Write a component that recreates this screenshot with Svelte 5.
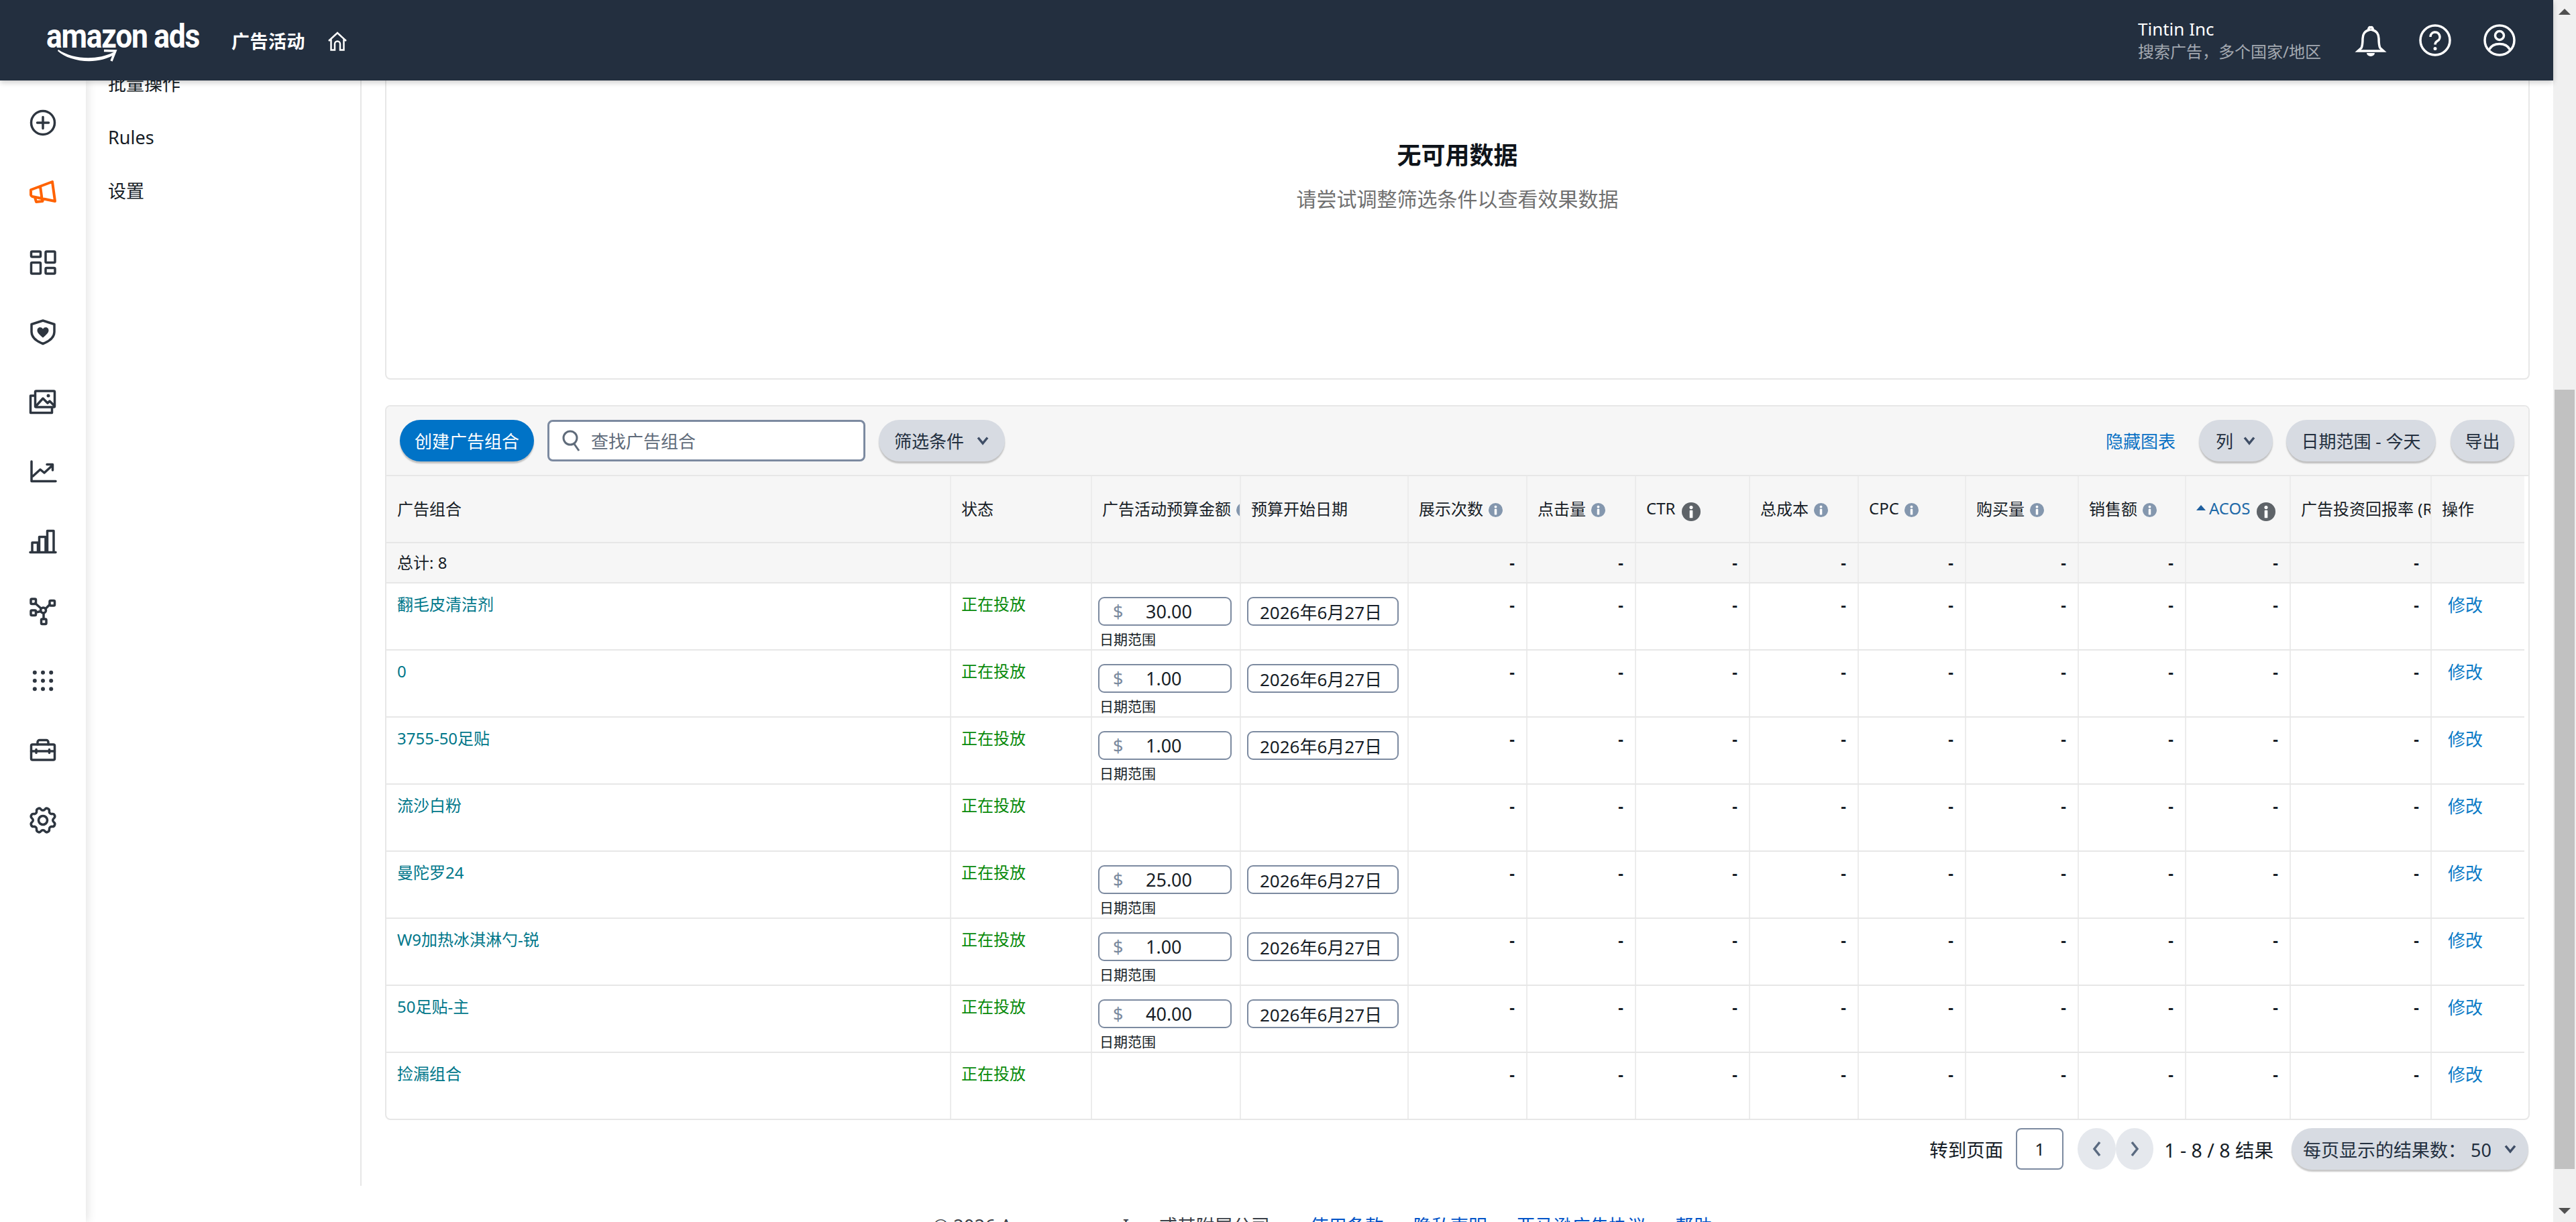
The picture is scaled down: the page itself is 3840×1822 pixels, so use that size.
<script>
  const rows = [
    { name: '翻毛皮清洁剂', budget: '30.00' },
    { name: '0', budget: '1.00' },
    { name: '3755-50足贴', budget: '1.00' },
    { name: '流沙白粉', budget: null },
    { name: '曼陀罗24', budget: '25.00' },
    { name: 'W9加热冰淇淋勺-锐', budget: '1.00' },
    { name: '50足贴-主', budget: '40.00' },
    { name: '捡漏组合', budget: null }
  ];
  const metrics = [
    { label: '展示次数', info: 'light' },
    { label: '点击量', info: 'light' },
    { label: 'CTR', info: 'dark' },
    { label: '总成本', info: 'light' },
    { label: 'CPC', info: 'light' },
    { label: '购买量', info: 'light' },
    { label: '销售额', info: 'light' },
    { label: 'ACOS', info: 'dark', sorted: true },
    { label: '广告投资回报率 (ROAS)', info: null }
  ];
</script>

{#snippet info(kind)}
  <svg class="info {kind}" viewBox="0 0 24 24" aria-hidden="true">
    <circle cx="12" cy="12" r="12" />
    <circle class="glyph" cx="12" cy="6.5" r="2.2" />
    <rect class="glyph" x="10" y="10" width="4" height="10" rx="1" />
  </svg>
{/snippet}

{#snippet chevron()}
  <svg class="chev" viewBox="0 0 20 14" aria-hidden="true"><path d="M3 2.5 10 11l7-8.5" /></svg>
{/snippet}

<div class="app">
  <div class="page">
    <header class="top">
      <div class="logo">
        <span class="logo-text">amazon ads</span>
        <svg class="swoosh" viewBox="0 0 100 30" aria-hidden="true">
          <path class="sw-fill" d="M1 6C18 22 60 28 86 11L84 8C60 20 24 19 2 4Z" />
          <path class="sw-head" d="M70 5.500 87 6 81 21" />
        </svg>
      </div>
      <span class="top-title">广告活动</span>
      <svg class="home" viewBox="0 0 30 30" aria-hidden="true">
        <path d="M2 14 15 2l13 12M5.500 11.500V27.500H11V18.500a4 4 0 0 1 8 0V27.500h5.500V11.500" />
      </svg>
      <div class="account">
        <div class="acct-name">Tintin Inc</div>
        <div class="acct-sub">搜索广告，多个国家/地区</div>
      </div>
      <svg class="top-icon bell" viewBox="0 0 48 48" aria-hidden="true">
        <path d="M24 5a2 2 0 0 1 2 3.500c7 1.500 10 7 10 13 0 7 1 12 2 14l5 4.500H5l5-4.500c1-2 2-7 2-14 0-6 3-11.500 10-13A2 2 0 0 1 24 5Z" />
        <path class="bell-clap" d="M18 43h12a6 5 0 0 1-12 0Z" />
      </svg>
      <svg class="top-icon help" viewBox="0 0 48 48" aria-hidden="true">
        <circle cx="24" cy="24" r="22" />
        <path d="M17 19a7 7 0 1 1 10.500 6c-2.500 1.500-3.500 2.500-3.500 5.500" />
        <circle class="dot" cx="24" cy="36.500" r="2.500" />
      </svg>
      <svg class="top-icon user" viewBox="0 0 48 48" aria-hidden="true">
        <circle cx="24" cy="24" r="22" />
        <circle cx="24" cy="17" r="6.500" />
        <path d="M8.500 38c3-6 9-8.500 15.500-8.500S36.500 32 39.500 38" />
      </svg>
    </header>

    <div class="body">
      <aside class="rail">
        <svg class="ri" viewBox="0 0 48 48"><circle cx="24" cy="24" r="17.500" /><path d="M24 15.500v17M15.500 24h17" /></svg>
        <svg class="ri orange" viewBox="0 0 48 48"><path d="M6 20 38 8l4 29-34-7a3.500 3.500 0 0 1-2-2.500ZM20 15l2.500 18M12 31.500l2 6.500 9.500-1-1-3" /></svg>
        <svg class="ri" viewBox="0 0 48 48"><rect x="6.500" y="8" width="14" height="8" rx="1.500" /><rect x="28" y="8" width="14" height="16.500" rx="1.500" /><rect x="6.500" y="24.500" width="14" height="16.500" rx="1.500" /><rect x="28" y="32.500" width="14" height="8.500" rx="1.500" /></svg>
        <svg class="ri" viewBox="0 0 48 48"><path d="M24 7l17 5.500V24c0 9-8 14-17 17.500C15 38 7 33 7 24V12.500Z" /><path class="solid" d="M24 32.500C19 28 15.500 25.500 15.500 21.500 15.500 16.500 21.500 15.500 24 19.500 26.500 15.500 32.500 16.500 32.500 21.500 32.500 25.500 29 28 24 32.500Z" /></svg>
        <svg class="ri" viewBox="0 0 48 48"><rect x="12.500" y="8" width="29" height="24" rx="1.500" /><path d="M12 15H5.500v25.500h32V34M14 30l10-11 7 7 3-3 6 6" /><circle class="solid" cx="32" cy="15" r="2.500" /></svg>
        <svg class="ri" viewBox="0 0 48 48"><path d="M7 9v29.500h36M9 31l11-10 6 5 12-11M30 13.500h8.500V22" /></svg>
        <svg class="ri" viewBox="0 0 48 48"><path d="M8 39V26h8.500v13M18.500 39V17.500H28V39M30.500 39V8.500H40V39M5 40.500h38" /></svg>
        <svg class="ri" viewBox="0 0 48 48"><rect x="6" y="6" width="7.500" height="7.500" rx="1.500" /><rect x="34" y="8.500" width="7.500" height="7.500" rx="1.500" /><rect x="6" y="23" width="7.500" height="7.500" rx="1.500" /><rect x="21.500" y="36" width="7.500" height="7.500" rx="1.500" /><circle cx="24.500" cy="23" r="4" /><path d="M12.500 12.500 21 20M34 14.500 28 20.500M13.500 26l7.500-1.500M25 27v9" /></svg>
        <svg class="ri" viewBox="0 0 48 48"><g class="solid"><circle cx="11.800" cy="11.800" r="3" /><circle cx="24" cy="11.800" r="3" /><circle cx="36.200" cy="11.800" r="3" /><circle cx="11.800" cy="24" r="3" /><circle cx="24" cy="24" r="3" /><circle cx="36.200" cy="24" r="3" /><circle cx="11.800" cy="36.200" r="3" /><circle cx="24" cy="36.200" r="3" /><circle cx="36.200" cy="36.200" r="3" /></g></svg>
        <svg class="ri" viewBox="0 0 48 48"><rect x="6.500" y="15" width="35" height="23" rx="2" /><path d="M16 15v-3.500a3 3 0 0 1 3-3h10a3 3 0 0 1 3 3V15M6.500 25h35M14 22.500v5M33.500 22.500v5" /></svg>
        <svg class="ri" viewBox="0 0 24 24"><g transform="translate(12 12) rotate(22.500) scale(1.050) translate(-12 -12)"><path class="thin" d="M10.325 4.317c.426-1.756 2.924-1.756 3.350 0a1.724 1.724 0 0 0 2.573 1.066c1.543-.94 3.310.826 2.370 2.370a1.724 1.724 0 0 0 1.065 2.572c1.756.426 1.756 2.924 0 3.350a1.724 1.724 0 0 0-1.066 2.573c.94 1.543-.826 3.310-2.370 2.370a1.724 1.724 0 0 0-2.572 1.065c-.426 1.756-2.924 1.756-3.350 0a1.724 1.724 0 0 0-2.573-1.066c-1.543.94-3.310-.826-2.370-2.370a1.724 1.724 0 0 0-1.065-2.572c-1.756-.426-1.756-2.924 0-3.350a1.724 1.724 0 0 0 1.066-2.573c-.94-1.543.826-3.310 2.370-2.370.996.608 2.296.07 2.572-1.065Z" /><circle class="thin" cx="12" cy="12" r="3.100" /></g></svg>
      </aside>

      <nav class="side">
        <a class="side-item">批量操作</a>
        <a class="side-item">Rules</a>
        <a class="side-item">设置</a>
      </nav>

      <main class="main">
        <section class="empty">
          <div class="empty-title">无可用数据</div>
          <div class="empty-sub">请尝试调整筛选条件以查看效果数据</div>
        </section>

        <section class="card">
          <div class="toolbar">
            <button class="btn primary">创建广告组合</button>
            <div class="search">
              <svg class="search-icon" viewBox="0 0 28 32" aria-hidden="true"><circle cx="12" cy="12" r="10" /><path d="m18 21 7 10" /></svg>
              <span>查找广告组合</span>
            </div>
            <button class="btn filter">筛选条件 {@render chevron()}</button>
            <a class="hide-chart">隐藏图表</a>
            <button class="btn cols">列 {@render chevron()}</button>
            <button class="btn range">日期范围 - 今天</button>
            <button class="btn export">导出</button>
          </div>

          <div class="row head">
            <div class="c">广告组合</div>
            <div class="c">状态</div>
            <div class="c">广告活动预算金额 {@render info('light')}</div>
            <div class="c">预算开始日期</div>
            {#each metrics as m}
              <div class="c">
                {#if m.sorted}<span class="tri"></span>{/if}
                <span class:sorted={m.sorted}>{m.label}</span>
                {#if m.info}{@render info(m.info)}{/if}
              </div>
            {/each}
            <div class="c">操作</div>
          </div>

          <div class="row total">
            <div class="c">总计: 8</div>
            <div class="c"></div>
            <div class="c"></div>
            <div class="c"></div>
            {#each metrics as m}<div class="c num">-</div>{/each}
            <div class="c"></div>
          </div>

          {#each rows as r}
            <div class="row item">
              <div class="c"><a class="name">{r.name}</a></div>
              <div class="c status">正在投放</div>
              <div class="c field">
                {#if r.budget}
                  <div class="input money"><span class="cur">$</span><span>{r.budget}</span></div>
                  <div class="hint">日期范围</div>
                {/if}
              </div>
              <div class="c field">
                {#if r.budget}<div class="input date">2026年6月27日</div>{/if}
              </div>
              {#each metrics as m}<div class="c num">-</div>{/each}
              <div class="c action"><a class="edit">修改</a></div>
            </div>
          {/each}
        </section>

        <div class="pager">
          <span class="goto">转到页面</span>
          <div class="page-input">1</div>
          <div class="arrows">
            <button class="arrow" aria-label="上一页"><svg viewBox="0 0 14 26"><path d="M11 3 3 13l8 10" /></svg></button>
            <button class="arrow" aria-label="下一页"><svg viewBox="0 0 14 26"><path d="m3 3 8 10-8 10" /></svg></button>
          </div>
          <span class="count">1 - 8 / 8 结果</span>
          <button class="btn per">每页显示的结果数： 50 {@render chevron()}</button>
        </div>

        <footer class="foot">
          <span class="copy">© 2026 Amazon.com, Inc. 或其附属公司</span>
          <a>使用条款</a><a>隐私声明</a><a>亚马逊广告协议</a><a>帮助</a>
        </footer>
      </main>
    </div>
  </div>

  <div class="scrollbar">
    <span class="sb-up"></span>
    <div class="sb-thumb"></div>
    <span class="sb-down"></span>
  </div>
</div>

<style>
  :global(body) {
    margin: 0;
    overflow: hidden;
    background: #fff;
  }
  .app {
    width: 3840px;
    height: 1822px;
    display: flex;
    overflow: hidden;
    font-family: "Noto Sans", "Noto Sans CJK SC", sans-serif;
    color: #161d26;
    font-size: 24px;
  }
  .page {
    width: 3806px;
    height: 1822px;
    display: flex;
    flex-direction: column;
  }
  a { cursor: pointer; }
  button { font: inherit; border: 0; padding: 0; }

  .top {
    height: 120px;
    flex: none;
    background: #232f3f;
    display: flex;
    align-items: center;
    padding: 0 56px 0 69px;
    color: #fff;
    position: relative;
    z-index: 3;
    box-shadow: 0 3px 8px rgba(0, 0, 0, 0.2);
  }
  .logo {
    position: relative;
    width: 230px;
    height: 70px;
    flex: none;
    margin-right: 46px;
    margin-top: -8px;
  }
  .logo-text {
    display: block;
    font-family: Roboto, sans-serif;
    font-weight: 700;
    font-size: 50px;
    line-height: 66px;
    letter-spacing: -1.5px;
    white-space: nowrap;
    transform: scaleX(0.89);
    transform-origin: 0 50%;
  }
  .swoosh {
    position: absolute;
    left: 16px;
    top: 49px;
    width: 100px;
    height: 30px;
  }
  .sw-fill { fill: #fff; }
  .sw-head { fill: none; stroke: #fff; stroke-width: 3.5; }
  .top-title {
    font-size: 27px;
    font-weight: 700;
    letter-spacing: 0.5px;
  }
  .home {
    width: 30px;
    height: 30px;
    margin-left: 33px;
    margin-top: 3px;
    fill: none;
    stroke: #fff;
    stroke-width: 2.500;
  }
  .account {
    margin-left: auto;
    margin-right: 49px;
    width: 274px;
    margin-top: -2px;
  }
  .acct-name { font-size: 26px; line-height: 36px; }
  .acct-sub { font-size: 24px; line-height: 32px; color: #a3a9b1; white-space: nowrap; }
  .top-icon {
    width: 48px;
    height: 48px;
    fill: none;
    stroke: #fff;
    stroke-width: 3.500;
    margin-left: 48px;
    flex: none;
  }
  .top-icon.bell { margin-left: 0; }
  .bell-clap, .dot { fill: #fff; stroke: none; }

  .body {
    flex: 1;
    display: flex;
    min-height: 0;
    overflow: hidden;
  }
  .rail {
    width: 128px;
    flex: none;
    display: flex;
    flex-direction: column;
    align-items: center;
    gap: 56px;
    padding-top: 39px;
    background: #fff;
    box-shadow: 2px 0 14px rgba(0, 0, 0, 0.12);
    position: relative;
    z-index: 2;
  }
  .ri {
    width: 48px;
    height: 48px;
    flex: none;
    fill: none;
    stroke: #2e3640;
    stroke-width: 3.500;
    stroke-linejoin: round;
    stroke-linecap: round;
  }
  .ri .thin { stroke-width: 1.700; }
  .ri .solid { fill: #2e3640; stroke: none; }
  .ri.orange { stroke: #ff6200; stroke-width: 4; }

  .side {
    width: 411px;
    height: 1683px;
    flex: none;
    box-sizing: border-box;
    border-right: 2px solid #e6e6e6;
    padding-left: 33px;
    margin-top: -35px;
    display: flex;
    flex-direction: column;
  }
  .side-item {
    height: 80px;
    line-height: 80px;
    font-size: 27px;
    color: #161d26;
  }

  .main {
    flex: 1;
    min-width: 0;
    padding: 0 35px;
  }
  .empty {
    height: 444px;
    box-sizing: content-box;
    border: 2px solid #e7e7e7;
    border-top: 0;
    border-radius: 0 0 8px 8px;
    margin-bottom: 38px;
    display: flex;
    flex-direction: column;
    align-items: center;
  }
  .empty-title {
    font-size: 36px;
    font-weight: 700;
    line-height: 48px;
    margin-top: 88px;
    color: #0f141a;
  }
  .empty-sub {
    font-size: 30px;
    line-height: 42px;
    margin-top: 20px;
    color: #707070;
  }

  .card {
    border: 2px solid #e7e7e7;
    border-radius: 8px;
    overflow: hidden;
    background: #fff;
  }
  .toolbar {
    height: 102px;
    background: #f6f6f6;
    border-bottom: 2px solid #e7e7e7;
    display: flex;
    align-items: center;
    padding: 0 21px 0 20px;
    font-size: 26px;
  }
  .btn {
    height: 62px;
    border-radius: 31px;
    background: #d7dbe2;
    color: #232f3f;
    box-shadow: 0 3px 2px rgba(0, 0, 0, 0.22);
    display: inline-flex;
    align-items: center;
    justify-content: center;
    font-size: 26px;
    white-space: nowrap;
    flex: none;
    box-sizing: border-box;
  }
  .btn.primary {
    width: 200px;
    background: #0073c7;
    color: #fff;
  }
  .search {
    width: 474px;
    height: 62px;
    box-sizing: border-box;
    margin: 0 20px 0 20px;
    border: 3px solid #7c8aa0;
    border-radius: 8px;
    background: #fff;
    display: flex;
    align-items: center;
    padding-left: 19px;
    gap: 15px;
    color: #5f6b7a;
  }
  .search-icon {
    width: 28px;
    height: 32px;
    fill: none;
    stroke: #5f6b7a;
    stroke-width: 3;
  }
  .btn.filter { width: 188px; gap: 18px; }
  .chev {
    width: 20px;
    height: 14px;
    fill: none;
    stroke: #3f4e66;
    stroke-width: 3.500;
    flex: none;
  }
  .hide-chart {
    margin-left: auto;
    margin-right: 35px;
    color: #0a72c5;
  }
  .btn.cols { width: 110px; gap: 14px; }
  .btn.range { width: 223px; margin-left: 20px; }
  .btn.export { width: 95px; margin-left: 22px; }

  .row {
    display: grid;
    grid-template-columns: 840px 210px 222px 250px 177px 162px 170px 162px 160px 168px 160px 156px 210px 140px;
    width: 3187px;
    border-bottom: 2px solid #e7e7e7;
    box-sizing: border-box;
  }
  .row .c {
    border-left: 2px solid #ececec;
    padding: 0 15px;
    min-width: 0;
    overflow: hidden;
    white-space: nowrap;
  }
  .row .c:first-child { border-left: 0; padding-left: 16px; }
  .head { height: 100px; background: #f6f6f6; }
  .head .c {
    display: flex;
    align-items: center;
    gap: 8px;
    padding-bottom: 4px;
  }
  .total { height: 60px; background: #f6f6f6; }
  .total .c { line-height: 58px; }
  .item { height: 100px; }
  .item:last-child { border-bottom: 0; height: 98px; }
  .item .c { padding-top: 15px; line-height: 32px; }
  .item .num, .item .action { padding-top: 16px; }
  .name { color: #00778a; }
  .status { color: #078a0a; }
  .num {
    text-align: right;
    font-weight: 700;
    padding-right: 17px !important;
  }
  .edit { color: #0a7ac6; font-size: 26px; padding-left: 9px; }

  .info {
    width: 21px;
    height: 21px;
    flex: none;
    margin-top: 7px;
  }
  .info.light { fill: #8497ae; }
  .info.dark { fill: #5e6368; width: 28px; height: 28px; margin: 12px 0 0 2px; }
  .info .glyph { fill: #fff; }
  .tri {
    width: 0;
    height: 0;
    border-left: 7px solid transparent;
    border-right: 7px solid transparent;
    border-bottom: 8px solid #1f5f9e;
    flex: none;
    margin-right: -3px;
  }
  .sorted { color: #1f6aa8; }

  .row .field { padding: 20px 0 0 9px; }
  .input {
    height: 43px;
    box-sizing: border-box;
    border: 2px solid #7c8aa0;
    border-radius: 9px;
    background: #fff;
    display: flex;
    align-items: center;
    font-size: 27px;
    line-height: 39px;
  }
  .money { width: 199px; padding-left: 20px; }
  .cur { width: 49px; color: #7b8a9e; flex: none; }
  .date { width: 226px; padding: 4px 0 0 17px; font-size: 26px; }
  .hint {
    font-size: 21px;
    line-height: 26px;
    margin-top: 7px;
    padding-left: 2px;
  }

  .pager {
    height: 62px;
    margin-top: 12px;
    display: flex;
    align-items: center;
    justify-content: flex-end;
    padding-right: 2px;
    font-size: 27.500px;
  }
  .page-input {
    width: 71px;
    height: 62px;
    box-sizing: border-box;
    margin: 0 21px 0 19px;
    border: 2px solid #7c8aa0;
    border-radius: 8px;
    display: flex;
    align-items: center;
    justify-content: center;
    font-size: 26px;
  }
  .arrows { display: flex; }
  .arrow {
    width: 56.500px;
    height: 62px;
    border-radius: 50%;
    background: #e5e8ed;
    display: flex;
    align-items: center;
    justify-content: center;
  }
  .arrow svg {
    width: 14px;
    height: 26px;
    fill: none;
    stroke: #5a6a80;
    stroke-width: 3.500;
  }
  .count { margin: 0 27px 0 16px; font-size: 28.500px; }
  .btn.per { width: 353px; gap: 18px; font-size: 27px; }

  .foot {
    display: flex;
    gap: 44px;
    padding-left: 817px;
    margin-top: 66px;
    font-size: 27.500px;
    line-height: 36px;
    white-space: nowrap;
  }
  .foot a { color: #0053c7; }
  .copy { color: #3a3f47; margin-right: 16px; }

  .scrollbar {
    width: 34px;
    flex: none;
    height: 1822px;
    background: #f0f0f0;
    display: flex;
    flex-direction: column;
    align-items: center;
    position: relative;
  }
  .sb-up, .sb-down {
    position: absolute;
    width: 0;
    height: 0;
    border-left: 9px solid transparent;
    border-right: 9px solid transparent;
  }
  .sb-up { top: 13px; border-bottom: 9px solid #505050; }
  .sb-down { bottom: 12px; border-top: 9px solid #505050; }
  .sb-thumb {
    width: 30px;
    height: 1162px;
    margin-top: 581px;
    background: #c1c1c1;
    box-sizing: border-box;
  }
</style>
